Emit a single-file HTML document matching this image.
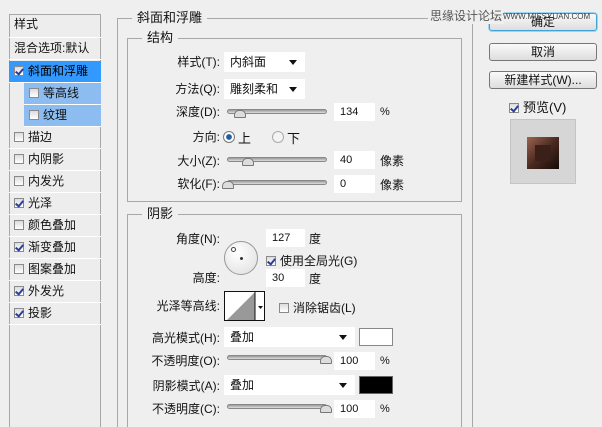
<!DOCTYPE html><html><head><meta charset="utf-8"><style>
*{box-sizing:border-box;margin:0;padding:0}
html,body{width:602px;height:427px;overflow:hidden}
body{background:#efefef;font-family:"Liberation Sans","Noto Sans CJK SC",sans-serif;font-size:12px;color:#111;position:relative}
#w{position:absolute;left:0;top:0;width:602px;height:427px;overflow:hidden}
.a{position:absolute}
.row{position:absolute;left:9px;width:92px;height:22px;border-bottom:1px solid #fff;line-height:21px;padding-left:5px;white-space:nowrap}
.cb{display:inline-block;width:10px;height:10px;border:1px solid #8a8a8a;background:linear-gradient(#dcdcdc,#fff);vertical-align:-1px;margin-right:4px;position:relative}
.cb.on:after{content:"";position:absolute;left:2px;top:0px;width:3px;height:6px;border:solid #2a3f9a;border-width:0 2px 2px 0;transform:rotate(40deg)}
.box{position:absolute;border:1px solid #a8a8a8}
.lg{position:absolute;background:#efefef;padding:0 5px;font-size:13px;line-height:14px}
.lbl{position:absolute;text-align:right;width:110px;line-height:16px}
.inp{position:absolute;background:#fff;height:18px;line-height:18px;padding-left:6px;font-size:11px}
.dd{position:absolute;background:#fff;height:20px;line-height:20px;padding-left:6px;font-size:12px}
.dd:after{content:"";position:absolute;right:8px;top:8px;border:4px solid transparent;border-top:5px solid #111;border-bottom:0}
.tr{position:absolute;height:5px;border-radius:3px;background:linear-gradient(#999,#ddd);border:1px solid #888;width:100px}
.th{position:absolute;width:12px;height:8px;background:#ddd;border:1px solid #777;border-radius:5px 5px 1px 1px}
.btn{position:absolute;left:489px;width:108px;height:18px;border:1px solid #777;border-radius:3px;background:linear-gradient(#fafafa,#ddd);text-align:center;line-height:16px;font-size:12px}
.u{position:absolute;font-size:11px}
</style></head><body><div id="w">
<div class="a" style="left:9px;top:14px;width:92px;height:420px;border:1px solid #a8a8a8;background:#ededed"></div>
<div class="row" style="top:14px;height:24px">样式</div>
<div class="row" style="top:38px">混合选项:默认</div>
<div class="row" style="top:61px;background:#3399ff;color:#000"><span class="cb on"></span>斜面和浮雕</div>
<div class="row" style="top:83px;left:24px;width:77px;background:#8cbcf0"><span class="cb"></span>等高线</div>
<div class="row" style="top:105px;left:24px;width:77px;background:#8cbcf0"><span class="cb"></span>纹理</div>
<div class="row" style="top:127px"><span class="cb"></span>描边</div>
<div class="row" style="top:149px"><span class="cb"></span>内阴影</div>
<div class="row" style="top:171px"><span class="cb"></span>内发光</div>
<div class="row" style="top:193px"><span class="cb on"></span>光泽</div>
<div class="row" style="top:215px"><span class="cb"></span>颜色叠加</div>
<div class="row" style="top:237px"><span class="cb on"></span>渐变叠加</div>
<div class="row" style="top:259px"><span class="cb"></span>图案叠加</div>
<div class="row" style="top:281px"><span class="cb on"></span>外发光</div>
<div class="row" style="top:303px"><span class="cb on"></span>投影</div>

<div class="box" style="left:117px;top:18px;width:356px;height:420px"></div>
<div class="lg" style="left:132px;top:11px">斜面和浮雕</div>
<div class="box" style="left:127px;top:38px;width:335px;height:164px"></div>
<div class="lg" style="left:142px;top:31px">结构</div>
<div class="lbl" style="left:110px;top:54px">样式(T):</div>
<div class="dd" style="left:224px;top:52px;width:81px">内斜面</div>
<div class="lbl" style="left:110px;top:81px">方法(Q):</div>
<div class="dd" style="left:224px;top:79px;width:81px">雕刻柔和</div>
<div class="lbl" style="left:110px;top:104px">深度(D):</div>
<div class="tr" style="left:227px;top:109px"></div><div class="th" style="left:234px;top:110px"></div>
<div class="inp" style="left:334px;top:103px;width:41px">134</div><div class="u" style="left:380px;top:106px">%</div>
<div class="lbl" style="left:110px;top:129px">方向:</div>
<div class="a" style="left:223px;top:131px;width:12px;height:12px;border-radius:50%;border:1px solid #777;background:radial-gradient(#1d5fa8 35%,#fff 45%)"></div>
<div class="a" style="left:238px;top:128px;font-size:13px">上</div>
<div class="a" style="left:272px;top:131px;width:12px;height:12px;border-radius:50%;border:1px solid #aaa;background:#f4f4f4"></div>
<div class="a" style="left:287px;top:128px;font-size:13px">下</div>
<div class="lbl" style="left:110px;top:153px">大小(Z):</div>
<div class="tr" style="left:227px;top:157px"></div><div class="th" style="left:242px;top:158px"></div>
<div class="inp" style="left:334px;top:151px;width:41px">40</div><div class="a" style="left:380px;top:152px;font-size:12px">像素</div>
<div class="lbl" style="left:110px;top:176px">软化(F):</div>
<div class="tr" style="left:227px;top:180px"></div><div class="th" style="left:222px;top:181px"></div>
<div class="inp" style="left:334px;top:175px;width:41px">0</div><div class="a" style="left:380px;top:176px;font-size:12px">像素</div>

<div class="box" style="left:127px;top:214px;width:335px;height:230px"></div>
<div class="lg" style="left:142px;top:207px">阴影</div>
<div class="lbl" style="left:110px;top:231px">角度(N):</div>
<div class="a" style="left:224px;top:241px;width:34px;height:34px;border-radius:50%;border:1px solid #999;background:radial-gradient(circle at 40% 35%,#fff,#ddd)"></div>
<div class="a" style="left:231px;top:247px;width:5px;height:5px;border-radius:50%;border:1px solid #444;background:#fff"></div>
<div class="a" style="left:240px;top:257px;width:3px;height:3px;background:#333;border-radius:50%"></div>
<div class="inp" style="left:266px;top:229px;width:39px">127</div><div class="a" style="left:309px;top:230px">度</div>
<div class="a" style="left:266px;top:252px"><span class="cb on"></span>使用全局光(G)</div>
<div class="lbl" style="left:110px;top:270px">高度:</div>
<div class="inp" style="left:266px;top:269px;width:39px">30</div><div class="a" style="left:309px;top:270px">度</div>
<div class="lbl" style="left:110px;top:298px">光泽等高线:</div>
<div class="a" style="left:224px;top:291px;width:41px;height:30px;border:1px solid #111;background:#fff;overflow:hidden">
<svg width="41" height="30" style="position:absolute;left:0;top:0"><polygon points="0,30 30,0 30,30" fill="#999"/><line x1="30" y1="0" x2="30" y2="30" stroke="#111"/><polygon points="33,14 38,14 35.5,17" fill="#111"/></svg></div>
<div class="a" style="left:279px;top:299px"><span class="cb"></span>消除锯齿(L)</div>
<div class="lbl" style="left:110px;top:330px">高光模式(H):</div>
<div class="dd" style="left:224px;top:327px;width:131px">叠加</div>
<div class="a" style="left:359px;top:328px;width:34px;height:18px;background:#fff;border:1px solid #888"></div>
<div class="lbl" style="left:110px;top:353px">不透明度(O):</div>
<div class="tr" style="left:227px;top:355px"></div><div class="th" style="left:320px;top:356px"></div>
<div class="inp" style="left:334px;top:352px;width:41px">100</div><div class="u" style="left:380px;top:355px">%</div>
<div class="lbl" style="left:110px;top:378px">阴影模式(A):</div>
<div class="dd" style="left:224px;top:375px;width:131px">叠加</div>
<div class="a" style="left:359px;top:376px;width:34px;height:18px;background:#000;border:1px solid #666"></div>
<div class="lbl" style="left:110px;top:401px">不透明度(C):</div>
<div class="tr" style="left:227px;top:404px"></div><div class="th" style="left:320px;top:405px"></div>
<div class="inp" style="left:334px;top:400px;width:41px">100</div><div class="u" style="left:380px;top:403px">%</div>

<div class="btn" style="top:13px;border-color:#3fa3d8;box-shadow:0 0 0 1px #9fd4f0">确定</div>
<div class="a" style="left:428px;top:7px;font-size:12px;color:#555;background:#efefef;padding:0 2px">思缘设计论坛</div>
<div class="a" style="left:503px;top:12px;font-size:8px;color:#444">WWW.MISSYUAN.COM</div>
<div class="btn" style="top:43px">取消</div>
<div class="btn" style="top:71px">新建样式(W)...</div>
<div class="a" style="left:509px;top:97px;font-size:13px"><span class="cb on"></span>预览(V)</div>
<div class="a" style="left:510px;top:119px;width:66px;height:65px;background:#d6d6d6;border:1px solid #c4c4c4"></div>
<div class="a" style="left:527px;top:137px;width:32px;height:32px;background:linear-gradient(135deg,#9c6450,#4a2a20 50%,#150b08)"></div>
<div class="a" style="left:535px;top:145px;width:16px;height:16px;background:#3a2018"></div>
</div></body></html>
